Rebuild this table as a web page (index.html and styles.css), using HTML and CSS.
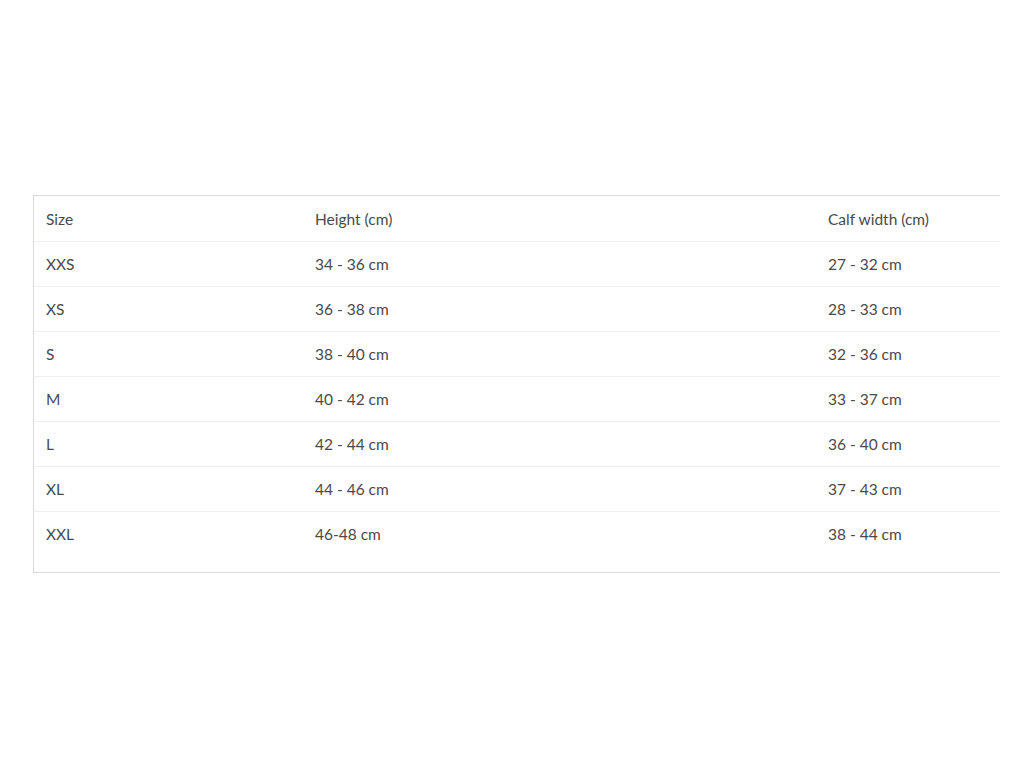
FILE: index.html
```html
<!DOCTYPE html>
<html>
<head>
<meta charset="utf-8">
<link rel="stylesheet" href="styles.css">
</head>
<body>
<div class="page">
  <div class="table-wrap">
    <table class="size-table">
      <colgroup>
        <col class="c1"><col class="c2"><col class="c3">
      </colgroup>
      <thead>
        <tr><th>Size</th><th>Height (cm)</th><th>Calf width (cm)</th></tr>
      </thead>
      <tbody>
        <tr><td>XXS</td><td>34 - 36 cm</td><td>27 - 32 cm</td></tr>
        <tr><td>XS</td><td>36 - 38 cm</td><td>28 - 33 cm</td></tr>
        <tr><td>S</td><td>38 - 40 cm</td><td>32 - 36 cm</td></tr>
        <tr><td>M</td><td>40 - 42 cm</td><td>33 - 37 cm</td></tr>
        <tr><td>L</td><td>42 - 44 cm</td><td>36 - 40 cm</td></tr>
        <tr><td>XL</td><td>44 - 46 cm</td><td>37 - 43 cm</td></tr>
        <tr><td>XXL</td><td>46-48 cm</td><td>38 - 44 cm</td></tr>
      </tbody>
    </table>
  </div>
</div>
</body>
</html>
```

FILE: styles.css
```css
html, body {
  margin: 0;
  padding: 0;
  background: #ffffff;
}
.page {
  padding: 195px 25px 0 33px;
  font-family: "Lato", "Open Sans", sans-serif;
  color: #4a4a4a;
}
.table-wrap {
  width: 966px;
  border-top: 1px solid #d9d9d9;
  border-bottom: 1px solid #d9d9d9;
  border-left: 1px solid #d9d9d9;
  padding-bottom: 16px;
}
.size-table {
  width: 100%;
  border-collapse: collapse;
  table-layout: fixed;
  font-size: 15.5px;
}
.c1 { width: 269px; }
.c2 { width: 513px; }
.c3 { width: auto; }
.size-table th,
.size-table td {
  height: 44px;
  padding: 0 12px;
  text-align: left;
  font-weight: normal;
  border-bottom: 1px solid #f1f1f1;
  vertical-align: middle;
}
.size-table th {
  height: 45px;
}
.size-table tbody tr:last-child td {
  border-bottom: none;
  height: 44px;
}
```
